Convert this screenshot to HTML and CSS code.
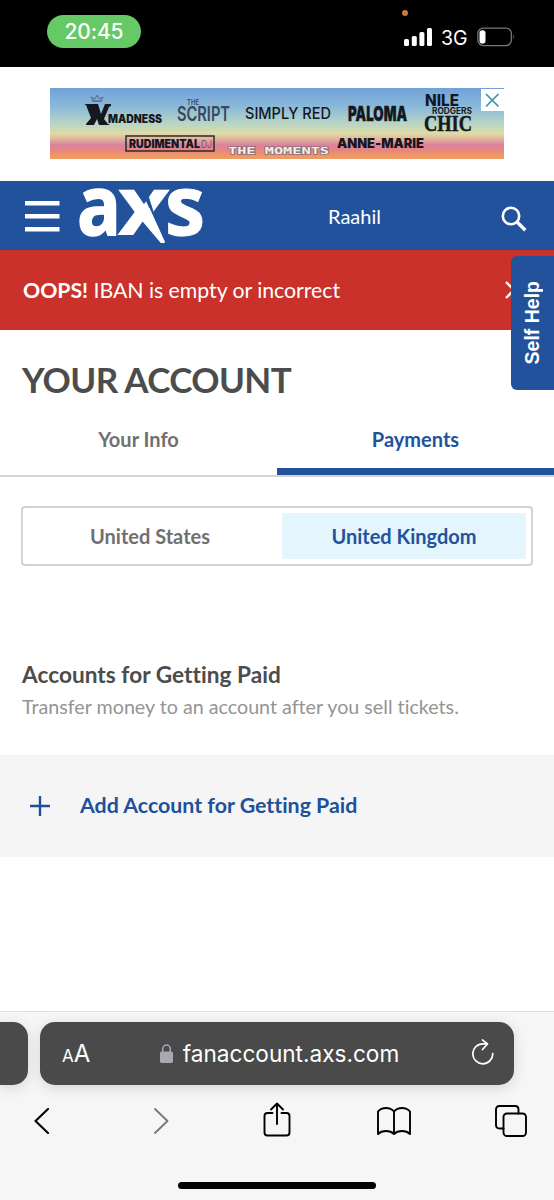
FILE: index.html
```html
<!DOCTYPE html>
<html lang="en">
<head>
<meta charset="utf-8">
<title>Your Account</title>
<link rel="stylesheet" href="styles.css">
</head>
<body>
<div class="screen">
  <div class="status">
    <span class="clock">20:45</span>
    <i class="mic-dot"></i>
    <div class="signals">
      <svg width="28" height="18" viewBox="0 0 28 18" fill="#fff"><rect x="0" y="11" width="5" height="7" rx="1.6"/><rect x="7.8" y="8" width="5" height="10" rx="1.6"/><rect x="15.4" y="4" width="5" height="14" rx="1.6"/><rect x="23" y="0" width="5" height="18" rx="1.6"/></svg>
      <span class="network">3G</span>
      <svg width="39" height="20" viewBox="0 0 39 20"><rect x=".8" y="1.2" width="33.6" height="17.4" rx="5.5" fill="none" stroke="#777" stroke-width="1.3"/><rect x="2.5" y="3.3" width="6" height="13.2" rx="2.8" fill="#fff"/><path d="M36.4 7.4q1.8 2.6 0 5.2z" fill="#777"/></svg>
    </div>
  </div>

  <div class="ad-slot">
    <svg class="ad" width="454" height="71" viewBox="0 0 454 71">
      <g fill="#15181f" font-family="Inter, sans-serif">
        <g fill="none" stroke="#53698b" stroke-width="1"><path d="M41 9l2 4h8l2-4-4 2-2-4-2 4zM42 13h10"/></g>
        <path d="M34 16h14l3 10 4-10h6v2l-2 1-5 12 4 5 2 1h-11l-2-6-3 6h-8v-1l5-6-5-13-2-1z"/>
        <text x="58" y="35" font-size="11.500" font-weight="900" textLength="54" lengthAdjust="spacingAndGlyphs">MADNESS</text>
        <g fill="#38495f"><text x="137" y="17" font-size="7" font-weight="600" textLength="12" lengthAdjust="spacingAndGlyphs">THE</text>
        <text x="127" y="33" font-size="20" font-weight="600" textLength="53" lengthAdjust="spacingAndGlyphs">SCRIPT</text></g>
        <text x="195" y="31" font-size="16" font-weight="500" textLength="86" lengthAdjust="spacingAndGlyphs">SIMPLY RED</text>
        <text x="298" y="33" font-size="20" font-weight="900" stroke="#15181f" stroke-width=".4" textLength="59" lengthAdjust="spacingAndGlyphs">PALOMA</text>
        <text x="375" y="18" font-size="15.500" font-weight="800" textLength="34" lengthAdjust="spacingAndGlyphs">NILE</text>
        <text x="382" y="26" font-size="8.500" font-weight="700" textLength="40" lengthAdjust="spacingAndGlyphs">RODGERS</text>
        <text x="374" y="42.500" font-family="Liberation Serif, serif" font-size="24" font-weight="700" stroke="#15181f" stroke-width=".5" textLength="48" lengthAdjust="spacingAndGlyphs">CHIC</text>
        <rect x="76" y="48" width="88" height="15" fill="none" stroke="#302832" stroke-width="1.500"/>
        <text x="79" y="60" font-size="11.500" font-weight="900" textLength="71" lengthAdjust="spacingAndGlyphs">RUDIMENTAL</text>
        <text x="151" y="60" font-size="10.500" fill="#8a5374" textLength="11" lengthAdjust="spacingAndGlyphs">DJ</text>
        <text x="178" y="66" font-family="DejaVu Sans Mono, monospace" font-size="9" font-weight="700" fill="#f5eceb" stroke="#8b7477" stroke-width="1.400" paint-order="stroke" textLength="101" lengthAdjust="spacingAndGlyphs">THE MOMENTS</text>
        <text x="287" y="60" font-size="13" font-weight="900" textLength="87" lengthAdjust="spacingAndGlyphs">ANNE-MARIE</text>
      </g>
      <rect x="431" y="1" width="23" height="22" fill="#fff"/>
      <path d="M436 6l12.500 12.500m0-12.500l-12.500 12.500" stroke="#3893b5" stroke-width="1.700"/>
    </svg>
  </div>

  <header class="header">
    <svg class="menu" width="35" height="32" viewBox="0 0 35 32" fill="#fff"><path d="M0 0h34.500v4.500H0zM0 13h34.500v4.500H0zM0 26h34.500v4.500H0z"/></svg>
    <svg class="logo" width="128" height="69" viewBox="0 0 128 69" fill="#fff">
      <text x="-2" y="53.500" textLength="44" lengthAdjust="spacingAndGlyphs" stroke="#fff" stroke-width="1.500">a</text>
      <text x="38" y="53.500" textLength="54" lengthAdjust="spacingAndGlyphs">x</text>
      <path d="M61 7h6l8 25h20v25H84z" fill="#22529c"/>
      <path d="M54 28l16.500-1L86 61q0 1-1 1h-2.500q-1 0-2-1.500L64 41z"/>
      <text x="86" y="53.500" textLength="40" lengthAdjust="spacingAndGlyphs" stroke="#fff" stroke-width="1">s</text>
    </svg>
    <span class="user">Raahil</span>
    <svg class="search" width="26" height="26" viewBox="0 0 26 26" fill="none" stroke="#fff"><circle cx="10" cy="10" r="8.200" stroke-width="2.600"/><path d="M15.800 15.800l8.500 8.500" stroke-width="3.400"/></svg>
  </header>

  <div class="alert">
    <p><b>OOPS!</b> IBAN is empty or incorrect</p>
    <svg width="18" height="18" viewBox="0 0 18 18" fill="none" stroke="#fff" stroke-width="2.400"><path d="M1 1l16 16M17 1L1 17"/></svg>
  </div>
  <div class="self-help"><span>Self Help</span></div>

  <main>
    <h1>YOUR ACCOUNT</h1>
    <nav class="tabs"><a>Your Info</a><a class="active">Payments</a></nav>
    <div class="countries"><span class="us">United States</span><span class="selected">United Kingdom</span></div>
    <section class="accounts">
      <h2>Accounts for Getting Paid</h2>
      <p>Transfer money to an account after you sell tickets.</p>
    </section>
    <div class="add">
      <svg width="20" height="20" viewBox="0 0 20 20" stroke="#21509b" stroke-width="2.400"><path d="M10 0v20M0 10h20"/></svg>
      <span>Add Account for Getting Paid</span>
    </div>
  </main>

  <footer class="browser">
    <div class="address-row">
      <i class="previous"></i>
      <div class="address">
        <span class="text-size"><small>A</small>A</span>
        <span class="url"><svg width="13" height="19" viewBox="0 0 13 19"><rect y="7.500" width="13" height="11.500" rx="1.800" fill="#aaa9af"/><path d="M2.700 8V5.200a3.800 4.100 0 0 1 7.600 0V8" fill="none" stroke="#aaa9af" stroke-width="1.500"/></svg><span>fanaccount.axs.com</span></span>
        <svg class="reload" width="22" height="26" viewBox="0 0 22 26" fill="none" stroke="#fff" stroke-width="1.700" stroke-linecap="round" stroke-linejoin="round"><path d="M20.800 14.500A10 10 0 1 1 10.800 4.800h4.500M10.500 1l5 4-5 5.500"/></svg>
      </div>
    </div>
    <div class="toolbar">
      <svg class="back" width="15" height="26" viewBox="0 0 15 26" stroke="#000" stroke-width="2.100"><path d="M14 1L1.500 13 14 25"/></svg>
      <svg class="forward" width="15" height="26" viewBox="0 0 15 26" stroke="#777" stroke-width="1.800"><path d="M1 1l12.500 12L1 25"/></svg>
      <svg class="share" width="28" height="35" viewBox="0 0 28 35" stroke="#000" stroke-width="1.900"><path d="M9.500 11H4.500Q1.500 11 1.500 14v16.500q0 3 3 3h19q3 0 3-3V14q0-3-3-3h-5M14 22V1.500M8 7.500l6-6 6 6"/></svg>
      <svg class="bookmarks" width="34" height="28" viewBox="0 0 34 28" stroke="#000" stroke-width="1.900"><path d="M17 4.500Q14 1 9 1T1 4.500V27q3-3 8-3t8 3q3-3 8-3t8 3V4.500Q30 1 25 1t-8 3.500zV27"/></svg>
      <svg class="pages" width="32" height="32" viewBox="0 0 32 32" stroke="#000" stroke-width="1.900"><rect x="8.500" y="8.500" width="22.500" height="22.500" rx="3.500"/><path d="M8.500 23.500H4.500Q1 23.500 1 20V4.500Q1 1 4.500 1H20q3.500 0 3.500 3.500v4"/></svg>
    </div>
    <i class="home"></i>
  </footer>
</div>
</body>
</html>
```
FILE: styles.css
```css
* { box-sizing: border-box; }
body { margin: 0; background: #fff; font-family: Lato, sans-serif; font-variant-ligatures: none; }
h1, h2, p { margin: 0; }
svg { display: block; flex: none; }
.screen { position: relative; width: 554px; height: 1200px; display: flex; flex-direction: column; overflow: hidden; }
.status { position: relative; height: 67px; background: #000; color: #fff; display: flex; justify-content: space-between; align-items: flex-start; padding: 15px 38px 0 47px; font-family: Inter, sans-serif; flex: none; }
.clock { width: 94px; height: 33px; border-radius: 17px; background: #65c965; display: flex; align-items: center; justify-content: center; font-size: 21px; font-weight: 500; letter-spacing: -.15px; }
.mic-dot { position: absolute; left: 402px; top: 10px; width: 6px; height: 6px; border-radius: 50%; background: #c47d32; }
.signals { display: flex; align-items: center; height: 20px; margin-top: 12px; }
.network { font-size: 19.500px; width: 27px; margin: 1px 9px 0; white-space: nowrap; }
.ad-slot { height: 114px; padding: 21px 50px 0; flex: none; }
.ad { background: linear-gradient(#70a2d8 0%, #8dbbd9 28%, #b8d5c5 50%, #dedba5 64%, #e2b99d 71%, #dc829f 80%, #e6857e 87%, #ef9b63 97%); }
.header { height: 69px; background: #22529c; display: flex; align-items: center; padding: 0 27px 0 25px; color: #fff; flex: none; }
.menu { margin-top: 3px; }
.logo { margin-left: 19px; overflow: visible; font: 700 82px "Open Sans", sans-serif; }
.user { font-size: 20px; margin-left: 121px; width: 54px; }
.search { margin-left: auto; margin-top: 6px; }
.alert { height: 80px; flex: none; background: #c9312a; color: #fff; display: flex; align-items: center; justify-content: space-between; padding: 0 31px 0 23px; font-size: 21.300px; letter-spacing: -.04px; }
.self-help { position: absolute; left: 511px; top: 256px; width: 43px; height: 134px; border-radius: 6px 0 0 6px; background: #22529c; color: #fff; display: flex; align-items: center; justify-content: center; font: 700 19.500px "Liberation Sans", sans-serif; }
.self-help span { writing-mode: vertical-rl; transform: rotate(180deg); }
main { flex: none; height: 681px; }
h1 { height: 74px; padding: 27px 22px 0; font-size: 35px; line-height: 44px; font-weight: 700; letter-spacing: -.6px; color: #4c4c4c; }
.tabs { display: flex; height: 73px; border-bottom: 2px solid #d4d4d4; }
.tabs a { flex: 1; text-align: center; font-size: 20px; line-height: 24px; padding-top: 23px; font-weight: 700; color: #707070; }
.tabs .active { color: #22529c; border-bottom: 7px solid #22529c; }
.countries { display: flex; margin: 29px 21px 0; height: 60px; border: 2px solid #d4d4d4; border-radius: 4px; padding: 5px; font-size: 20px; font-weight: 700; color: #707070; }
.countries span { flex: 1; display: flex; align-items: center; justify-content: center; padding-bottom: 1px; }
.countries .us { padding-right: 10px; }
.countries .selected { background: #e4f5fd; color: #22529c; flex: 0 0 244px; border-radius: 2px; }
.accounts { height: 189px; padding: 94px 22px 0; }
h2 { font-size: 22.600px; letter-spacing: .05px; line-height: 30px; color: #4c4c4c; }
.accounts p { font-size: 19.700px; line-height: 24px; margin-top: 5px; color: #949494; }
.add { height: 102px; background: #f5f5f5; display: flex; align-items: center; padding-left: 30px; gap: 30px; color: #21509b; font-size: 21.350px; font-weight: 700; }
.add span { padding-bottom: 2px; }
.browser { height: 189px; flex: none; background: #f6f6f6; border-top: 1px solid #dedede; display: flex; flex-direction: column; font-family: Inter, sans-serif; }
.address-row { display: flex; gap: 12px; padding-top: 10px; height: 73px; }
.previous { width: 28px; height: 63px; border-radius: 0 15px 15px 0; background: #4a4a4a; box-shadow: 0 3px 14px #0002; }
.address { width: 474px; height: 63px; border-radius: 15px; background: #4a4a4a; box-shadow: 0 3px 14px #0002; color: #fff; display: flex; align-items: center; justify-content: space-between; padding: 0 20px 0 22px; }
.text-size { font-size: 24px; width: 29px; white-space: nowrap; }
.text-size small { font-size: 17px; }
.url { display: flex; align-items: center; gap: 10px; font-size: 22.600px; margin-right: 4px; }
.reload { margin-bottom: 3px; }
.toolbar { display: flex; height: 72px; align-items: center; padding-left: 34px; fill: none; stroke-linecap: round; stroke-linejoin: round; }
.forward { margin-left: 105px; }
.share { margin-left: 94px; margin-bottom: 3px; }
.bookmarks { margin-left: 86px; }
.pages { margin-left: 84px; }
.home { width: 198px; height: 7px; background: #000; border-radius: 4px; margin: 25px auto 0; }
```
